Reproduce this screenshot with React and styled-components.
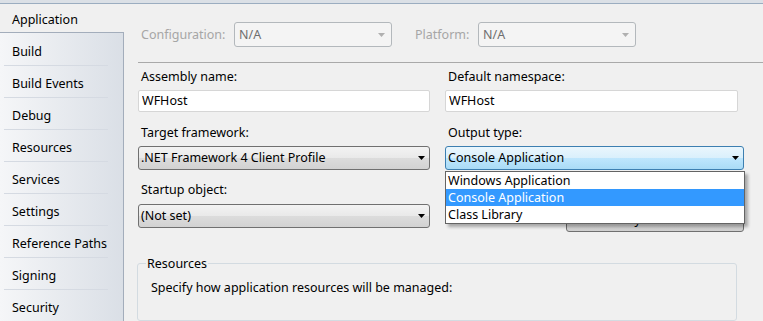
import React from "react"
import styled, { createGlobalStyle } from "styled-components"

const GlobalStyle = createGlobalStyle`
  html, body { margin: 0; padding: 0; }
  body {
    font-family: "Noto Sans", "Liberation Sans", sans-serif;
    font-size: 12.5px;
    color: #000;
    background: #f0f0f0;
  }
`

const Window = styled.div`
  width: 763px;
  height: 321px;
  overflow: hidden;
  display: flex;
  flex-direction: column;
  background: #f0f0f0;
`

const TopStrip = styled.div`
  flex: none;
  height: 3px;
  background: #dbe0e6;
  border-bottom: 1px solid #9badc0;
`

const Body = styled.div`
  flex: 1;
  display: flex;
  min-height: 0;
`

const Sidebar = styled.div`
  flex: none;
  width: 124px;
  display: flex;
  flex-direction: column;
`

const ActiveTab = styled.div`
  box-sizing: border-box;
  height: 30px;
  display: flex;
  align-items: center;
  padding: 3px 0 0 12px;
  line-height: 16px;
`

const TabList = styled.div`
  flex: 1;
  border-top: 1px solid #a3adbb;
  border-right: 1px solid #a3adbb;
  background: linear-gradient(to right, #f5f6f8, #dadfe6);
`

const Tab = styled.div`
  box-sizing: border-box;
  height: 32px;
  display: flex;
  align-items: center;
  padding: 6px 0 0 12px;
  line-height: 16px;
  & + & {
    background: linear-gradient(#d5dae2, #d5dae2) 4px 0 / 104px 1px no-repeat;
  }
`

const Main = styled.div`
  flex: 1;
  min-width: 0;
  display: flex;
  flex-direction: column;
  padding: 18px 0 0 14px;
`

const ConfigRow = styled.div`
  display: flex;
  align-items: center;
  height: 25px;
  padding-left: 3px;
`

const ConfigLabel = styled.span`
  width: ${p => p.$width}px;
  color: #a6a6a6;
  line-height: 16px;
`

const DisabledCombo = styled.div`
  box-sizing: border-box;
  width: 158px;
  height: 25px;
  display: flex;
  align-items: center;
  justify-content: space-between;
  padding: 0 6px 0 4px;
  border: 1px solid #b3b8bc;
  border-radius: 3px;
  background: #f4f4f4;
  color: #6f6f6f;
  margin-right: ${p => p.$gap || 0}px;
`

const Divider = styled.div`
  height: 1px;
  margin-top: 15px;
  background: #a9a9a9;
`

const FormGrid = styled.div`
  display: grid;
  grid-template-columns: 292px 300px;
  column-gap: 15px;
  margin-top: 6px;
`

const Field = styled.div`
  position: relative;
  display: flex;
  flex-direction: column;
  margin-top: ${p => p.$top || 0}px;
`

const Label = styled.div`
  line-height: 16px;
  padding-left: 3px;
  margin-bottom: ${p => p.$gap || 5}px;
`

const TextBox = styled.input`
  box-sizing: border-box;
  width: ${p => p.$width}px;
  height: 22px;
  margin: 0;
  padding: 0 3px;
  border: 1px solid #d6d6d6;
  border-radius: 2px;
  background: #fff;
  font: inherit;
  color: #000;
  outline: none;
`

const Combo = styled.div`
  box-sizing: border-box;
  width: ${p => p.$width}px;
  height: 24px;
  display: flex;
  align-items: center;
  justify-content: space-between;
  padding: 0 4px 0 2px;
  border: 1px solid ${p => (p.$open ? "#3c7fb1" : "#707070")};
  border-radius: 3px;
  background: ${p =>
    p.$open
      ? "linear-gradient(#eaf6fd, #d9f0fc 50%, #bee6fd 51%, #a9dbf6)"
      : "linear-gradient(#f3f3f3, #e9e9e9 50%, #dcdcdc 51%, #d2d2d2)"};
`

const DropList = styled.div`
  position: absolute;
  top: calc(100% + 1px);
  left: 0;
  z-index: 2;
  width: 300px;
  box-sizing: border-box;
  border: 1px solid #646464;
  background: #fff;
  box-shadow: 3px 3px 3px rgba(0, 0, 0, 0.3);
`

const DropItem = styled.div`
  height: 17px;
  line-height: 17px;
  padding-left: 2px;
  background: ${p => (p.$selected ? "#3399ff" : "transparent")};
  color: ${p => (p.$selected ? "#fff" : "#000")};
`

const InfoButton = styled.button`
  justify-self: end;
  align-self: start;
  width: 178px;
  height: 24px;
  margin: 38px 1px 0 0;
  padding: 0;
  border: 1px solid #707070;
  border-radius: 3px;
  background: linear-gradient(#f2f2f2, #ebebeb 50%, #dddddd 51%, #cfcfcf);
  font: inherit;
  color: #000;
`

const GroupBox = styled.fieldset`
  box-sizing: border-box;
  width: 600px;
  height: 120px;
  margin: 24px 0 0 -1px;
  padding: 0 8px;
  border: 1px solid #d3dbe1;
  border-radius: 3px;
`

const Legend = styled.legend`
  padding: 0 1px;
  line-height: 16px;
`

const GroupText = styled.p`
  margin: 8px 0 0 5px;
  line-height: 16px;
`

const Arrow = ({ color = "#000" }) => (
  <svg width="7" height="4" viewBox="0 0 7 4">
    <polygon points="0,0 7,0 3.5,4" fill={color} />
  </svg>
)

const tabs = [
  "Build",
  "Build Events",
  "Debug",
  "Resources",
  "Services",
  "Settings",
  "Reference Paths",
  "Signing",
  "Security"
]

const outputTypes = ["Windows Application", "Console Application", "Class Library"]

export default function App() {
  return (
    <Window>
      <GlobalStyle />
      <TopStrip />
      <Body>
        <Sidebar>
          <ActiveTab>Application</ActiveTab>
          <TabList>
            {tabs.map(tab => (
              <Tab key={tab}>{tab}</Tab>
            ))}
          </TabList>
        </Sidebar>

        <Main>
          <ConfigRow>
            <ConfigLabel $width={93}>Configuration:</ConfigLabel>
            <DisabledCombo $gap={23}>
              N/A
              <Arrow color="#b0b0b0" />
            </DisabledCombo>
            <ConfigLabel $width={63}>Platform:</ConfigLabel>
            <DisabledCombo>
              N/A
              <Arrow color="#b0b0b0" />
            </DisabledCombo>
          </ConfigRow>

          <Divider />

          <FormGrid>
            <Field>
              <Label>Assembly name:</Label>
              <TextBox $width={292} defaultValue="WFHost" readOnly />
            </Field>
            <Field>
              <Label>Default namespace:</Label>
              <TextBox $width={293} defaultValue="WFHost" readOnly />
            </Field>

            <Field $top={13}>
              <Label>Target framework:</Label>
              <Combo $width={292}>
                .NET Framework 4 Client Profile
                <Arrow />
              </Combo>
            </Field>
            <Field $top={13}>
              <Label>Output type:</Label>
              <Combo $width={299} $open>
                Console Application
                <Arrow />
              </Combo>
              <DropList>
                {outputTypes.map(type => (
                  <DropItem key={type} $selected={type === "Console Application"}>
                    {type}
                  </DropItem>
                ))}
              </DropList>
            </Field>

            <Field $top={12}>
              <Label $gap={6}>Startup object:</Label>
              <Combo $width={292}>
                (Not set)
                <Arrow />
              </Combo>
            </Field>
            <InfoButton>Assembly Information...</InfoButton>
          </FormGrid>

          <GroupBox>
            <Legend>Resources</Legend>
            <GroupText>Specify how application resources will be managed:</GroupText>
          </GroupBox>
        </Main>
      </Body>
    </Window>
  )
}
